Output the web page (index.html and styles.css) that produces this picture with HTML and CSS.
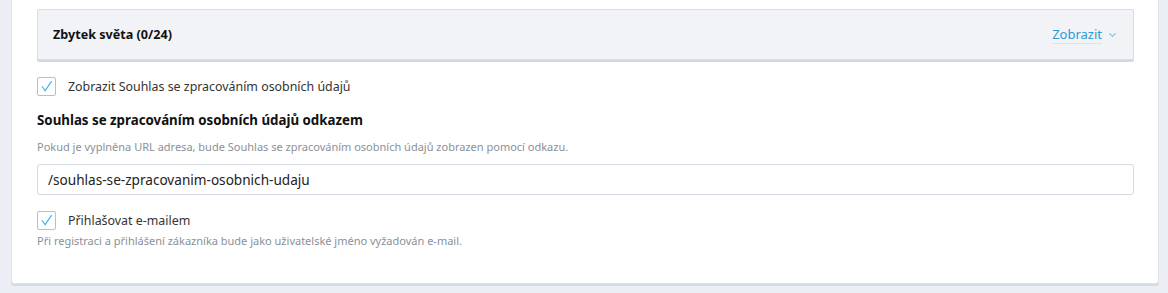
FILE: index.html
```html
<!DOCTYPE html>
<html lang="cs">
<head>
    <meta charset="UTF-8">
    <meta name="viewport" content="width=device-width, initial-scale=1.0">
    <title>Nastavení</title>
    <link rel="stylesheet" href="styles.css">
</head>
<body>
    <div class="card">
        <div class="panel">
            <span class="panel-title">Zbytek světa (0/24)</span>
            <a class="toggle" href="#"><span class="toggle-text">Zobrazit</span>
                <svg class="chevron" width="7" height="4" viewBox="0 0 7 4"><path d="M0.5 0.5 L3.5 3.3 L6.5 0.5" fill="none" stroke="#8bbcd9" stroke-width="1.1"/></svg>
            </a>
        </div>

        <label class="check-row first">
            <span class="box">
                <svg width="18" height="18" viewBox="0 0 18 18"><path d="M4.2 8.2 L7.6 12.8 L14.4 2.8" fill="none" stroke="#43b6ee" stroke-width="1.3"/></svg>
            </span>
            <span class="check-label">Zobrazit Souhlas se zpracováním osobních údajů</span>
        </label>

        <div class="field">
            <div class="field-title">Souhlas se zpracováním osobních údajů odkazem</div>
            <div class="help">Pokud je vyplněna URL adresa, bude Souhlas se zpracováním osobních údajů zobrazen pomocí odkazu.</div>
            <div class="input">/souhlas-se-zpracovanim-osobnich-udaju</div>
        </div>

        <label class="check-row second">
            <span class="box">
                <svg width="18" height="18" viewBox="0 0 18 18"><path d="M4.2 8.2 L7.6 12.8 L14.4 2.8" fill="none" stroke="#43b6ee" stroke-width="1.3"/></svg>
            </span>
            <span class="check-label">Přihlašovat e-mailem</span>
        </label>
        <div class="help help-last">Při registraci a přihlášení zákazníka bude jako uživatelské jméno vyžadován e-mail.</div>
    </div>
</body>
</html>
```

FILE: styles.css
```css
body {
    margin: 0;
    background: #ebeef5;
    font-family: "Noto Sans", "Open Sans", sans-serif;
    color: #333;
    height: 293px;
    overflow: hidden;
}
.card {
    margin: 0 9px 0 11px;
    background: #fff;
    border: 1px solid #dde1e8;
    border-top: none;
    border-radius: 0 0 3px 3px;
    box-shadow: 0 2px 0 #d5dae2;
    padding: 9px 24px 0 25px;
    box-sizing: border-box;
    height: 284px;
}
.panel {
    height: 51px;
    box-sizing: border-box;
    background: #f1f3f7;
    border: 1px solid #d9dde4;
    border-radius: 2px;
    box-shadow: 0 2px 0 #d3d8e0;
    display: flex;
    align-items: center;
    justify-content: space-between;
    padding: 0 17px 0 15px;
}
.panel-title {
    font-weight: bold;
    font-size: 12.6px;
    color: #111;
}
.toggle {
    display: flex;
    align-items: center;
    gap: 7px;
    text-decoration: none;
    color: #2b9bd3;
    font-size: 13px;
}
.toggle-text {
    border-bottom: 1px solid #cde8f6;
    line-height: 17px;
}
.chevron {
    margin-top: 1px;
}
.check-row {
    display: flex;
    align-items: center;
    gap: 12px;
    font-size: 12.4px;
    color: #333;
}
.check-row.first {
    margin-top: 17px;
}
.check-row.second {
    margin-top: 16px;
}
.box {
    width: 19px;
    height: 19px;
    box-sizing: border-box;
    border: 1px solid #b9bfc9;
    border-radius: 2px;
    background: #fff;
    display: flex;
}
.box svg {
    display: block;
}
.field {
    margin-top: 15px;
}
.field-title {
    font-weight: bold;
    font-size: 13.3px;
    color: #111;
    line-height: 18px;
}
.help {
    font-size: 11px;
    color: #8a9099;
    line-height: 16px;
    margin-top: 10px;
}
.help-last {
    margin-top: 3px;
}
.input {
    margin-top: 9px;
    height: 31px;
    box-sizing: border-box;
    border: 1px solid #d5d9e1;
    border-radius: 3px;
    padding: 0 10px;
    font-size: 13.6px;
    line-height: 29px;
    color: #222;
}
```
